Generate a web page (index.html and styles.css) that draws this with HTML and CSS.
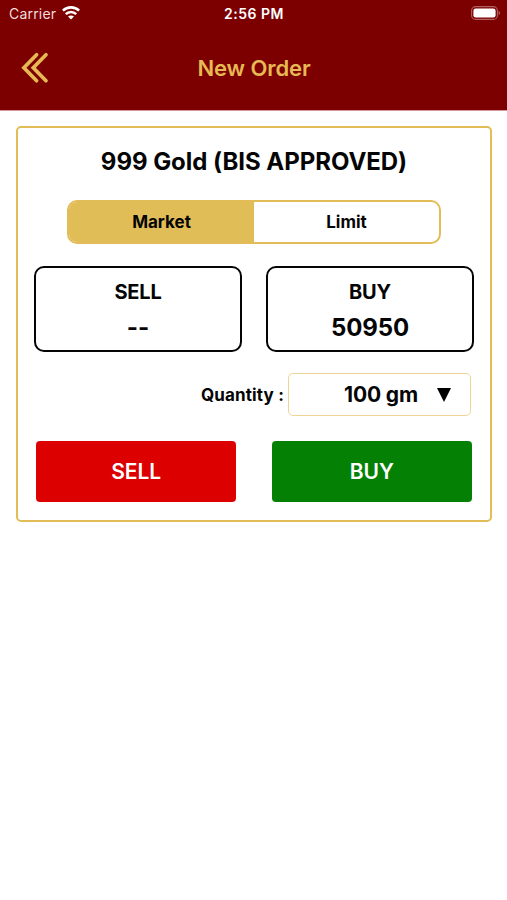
FILE: index.html
```html
<!DOCTYPE html>
<html lang="en">
<head>
<meta charset="utf-8">
<title>New Order</title>
<link rel="stylesheet" href="styles.css">
</head>
<body>
<header class="header">
  <div class="status">
    <div class="carrier">
      <span>Carrier</span>
      <svg class="wifi" viewBox="0 0 18 14" width="18" height="14" fill="none" stroke="#fff" stroke-width="2.6">
        <path d="M.9 4.7C5.4.2 12.6.2 17.1 4.7"/>
        <path d="M3.8 8.2c2.9-2.9 7.5-2.9 10.4 0"/>
        <path d="M9 13.5 6 10.6c1.7-1.6 4.3-1.6 6 0Z" fill="#fff" stroke="none"/>
      </svg>
    </div>
    <time class="clock">2:56 PM</time>
    <svg class="battery" viewBox="0 0 30 14" width="30" height="14">
      <rect x=".6" y=".6" width="25.8" height="12.8" rx="4" fill="none" stroke="#b06060" stroke-width="1.1"/>
      <rect x="2.4" y="2.4" width="22.2" height="9.2" rx="2.3" fill="#fff"/>
      <path d="M27.6 4.8c2 .8 2 3.6 0 4.4Z" fill="#b06060"/>
    </svg>
  </div>
  <div class="navbar">
    <svg class="back" viewBox="0 0 30 32" width="30" height="32" fill="none" stroke="#e6b954" stroke-width="3.7" stroke-linecap="round" stroke-linejoin="miter">
      <path d="M16.6 2.8 3.9 15.8l12.7 13"/>
      <path d="M26 2.8 13.3 15.8l12.7 13"/>
    </svg>
    <h1 class="heading">New Order</h1>
  </div>
</header>
<main class="card">
  <h2 class="product">999 Gold (BIS APPROVED)</h2>
  <div class="tabs">
    <div class="tab active">Market</div>
    <div class="tab">Limit</div>
  </div>
  <div class="prices">
    <div class="price"><span class="side">SELL</span><span class="value">--</span></div>
    <div class="price"><span class="side">BUY</span><span class="value">50950</span></div>
  </div>
  <div class="quantity">
    <span class="label">Quantity :</span>
    <div class="select">
      <span class="amount">100 gm</span>
      <svg class="arrow" viewBox="0 0 14 14" width="14" height="14"><path d="M0 0h14L7 14Z"/></svg>
    </div>
  </div>
  <div class="actions">
    <button class="action sell">SELL</button>
    <button class="action buy">BUY</button>
  </div>
</main>
</body>
</html>
```
FILE: styles.css
```css
* { box-sizing: border-box; }
body {
  margin: 0;
  min-height: 900px;
  background: #fff;
  color: #050505;
  font-family: Inter, "Liberation Sans", sans-serif;
}
svg { display: block; }
.header {
  height: 109px;
  background: #7c0000;
  box-shadow: 0 1px 0 #7c0000, 0 2px 0 #d09a9c;
}
.status {
  height: 27px;
  display: grid;
  grid-template-columns: 1fr auto 1fr;
  align-items: center;
  padding: 0 6px 0 9px;
  color: #fff;
}
.carrier {
  display: flex;
  align-items: center;
  gap: 6px;
  font-size: 14px;
  letter-spacing: .2px;
  color: #f3dcdc;
}
.wifi { margin-top: -1px; }
.clock {
  font-size: 14px;
  font-weight: 600;
  letter-spacing: .5px;
  margin-right: 2px;
}
.battery { justify-self: end; margin-top: -1px; }
.navbar {
  height: 81px;
  display: grid;
  grid-template-columns: 1fr auto 1fr;
  align-items: center;
  padding: 0 19px 0 20px;
}
.heading {
  margin: 0;
  color: #e6b954;
  font-size: 22px;
  font-weight: 600;
  letter-spacing: -.1px;
}
.navbar::after { content: ""; }
.card {
  margin: 17px 15px 0 16px;
  height: 396px;
  border: 2px solid #e2bd57;
  border-radius: 5px;
  padding: 19px 16px 18px;
}
.product {
  margin: 0;
  height: 30px;
  line-height: 30px;
  text-align: center;
  font-size: 24px;
  font-weight: 700;
  letter-spacing: -.04px;
}
.tabs {
  display: flex;
  width: 374px;
  height: 44px;
  margin: 23px auto 0;
  border: 2px solid #e2bd57;
  border-radius: 10px;
  overflow: hidden;
}
.tab {
  flex: 1;
  display: flex;
  align-items: center;
  justify-content: center;
  font-size: 17px;
  font-weight: 700;
  padding-bottom: 1px;
}
.tab.active { background: #e0bd57; }
.prices {
  display: flex;
  justify-content: space-between;
  margin-top: 22px;
}
.price {
  width: 208px;
  height: 86px;
  border: 2px solid #050505;
  border-radius: 10px;
  display: flex;
  flex-direction: column;
  align-items: center;
  padding-top: 6px;
}
.side { font-size: 20px; font-weight: 700; letter-spacing: -.2px; line-height: 36px; }
.value { font-size: 24px; font-weight: 700; letter-spacing: -.1px; line-height: 36px; }
.quantity {
  display: flex;
  align-items: center;
  justify-content: flex-end;
  gap: 4px;
  margin: 21px 3px 0 0;
}
.label { font-size: 17px; font-weight: 700; letter-spacing: .15px; }
.select {
  width: 183px;
  height: 43px;
  border: 1px solid #eed596;
  border-radius: 5px;
  display: flex;
  align-items: center;
  justify-content: flex-end;
  gap: 19px;
  padding-right: 19px;
}
.amount { font-size: 21px; font-weight: 700; letter-spacing: -.15px; }
.actions {
  display: flex;
  justify-content: space-between;
  margin: 25px 2.5px 0 2.4px;
}
.action {
  width: 199.4px;
  height: 61px;
  border: 0;
  border-radius: 4px;
  padding: 0;
  color: #fff;
  font-family: inherit;
  font-size: 21px;
  font-weight: 600;
  letter-spacing: -.1px;
}
.sell { background: #dc0000; }
.buy { background: #048004; }
```
